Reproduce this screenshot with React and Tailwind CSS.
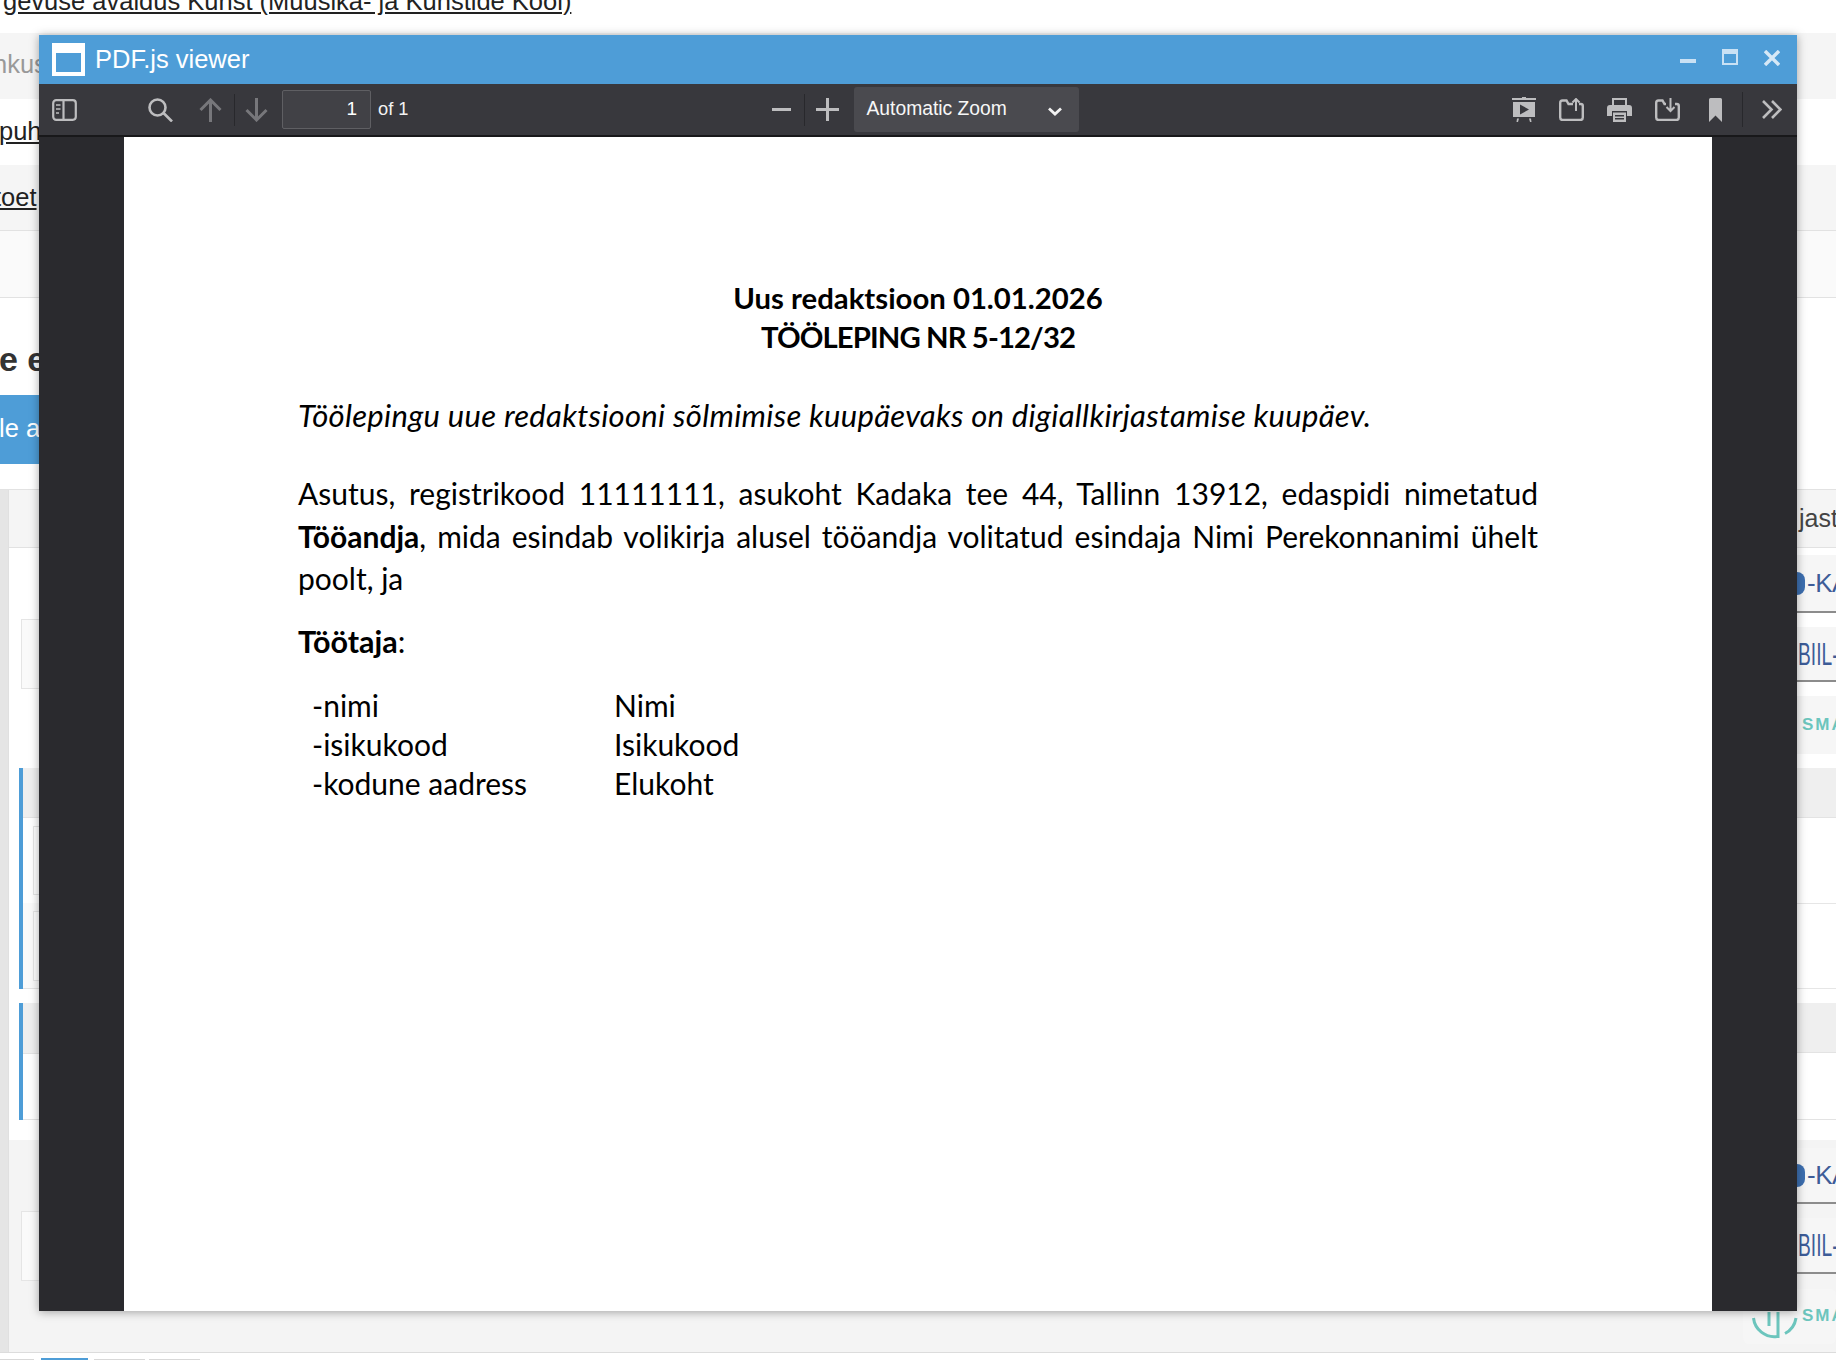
import React from 'react';

function PanelIcon() {
  return (
    <svg width="25" height="22" viewBox="0 0 25 22" fill="none" stroke="#bdbdbf" strokeWidth="2.2">
      <rect x="1.2" y="1.2" width="22.6" height="19.6" rx="3" />
      <path d="M11.5 1.2v19.6" />
      <path d="M4 6h4.500M4 10h4.500M4 14h3" strokeWidth="1.6" />
    </svg>
  );
}

function SearchIcon() {
  return (
    <svg width="25" height="24" viewBox="0 0 25 24" fill="none" stroke="#bdbdbf" strokeWidth="2.6">
      <circle cx="9.5" cy="9.5" r="8" />
      <path d="M15.5 15l8.500 8.500" />
    </svg>
  );
}

function ArrowUp() {
  return (
    <svg width="23" height="24" viewBox="0 0 23 24" fill="none" stroke="#77777b" strokeWidth="3">
      <path d="M11.5 24V2M1.500 12l10-10 10 10" />
    </svg>
  );
}

function ArrowDown() {
  return (
    <svg width="23" height="24" viewBox="0 0 23 24" fill="none" stroke="#77777b" strokeWidth="3">
      <path d="M11.5 0v22M1.500 12l10 10 10-10" />
    </svg>
  );
}

function PresentIcon() {
  return (
    <svg width="24" height="25" viewBox="0 0 24 25" fill="#bdbdbf">
      <rect x="0" y="1" width="24" height="2" />
      <rect x="10" y="0" width="4" height="2" />
      <path d="M1 5h22v15H1z" />
      <path d="M8 7.500l9 5-9 5z" fill="#38383d" />
      <path d="M5 21.500h2l-1 3.500H4.500zM17 21.500h2l.5 3.500H18z" />
    </svg>
  );
}

function FolderIcon({ down }) {
  return (
    <svg width="25" height="23" viewBox="0 0 25 23" fill="none" stroke="#bdbdbf" strokeWidth="2.4">
      <path d={down
        ? 'M11 6H9.500L7.500 2.500H3.500A2.400 2.400 0 0 0 1.200 4.900v14.700A2.400 2.400 0 0 0 3.500 22h18a2.400 2.400 0 0 0 2.300-2.400V8a2 2 0 0 0-2-2H20'
        : 'M14 6H9.500L7.500 2.500H3.500A2.400 2.400 0 0 0 1.200 4.900v14.700A2.400 2.400 0 0 0 3.500 22h18a2.400 2.400 0 0 0 2.300-2.400V8a2 2 0 0 0-2-2H20'} />
      {down ? (
        <path d="M15.500 0v12.500M11.500 9l4 4 4-4" strokeWidth="2" />
      ) : (
        <path d="M17 13V1M13.500 4.500L17 1l3.500 3.500" strokeWidth="2" />
      )}
    </svg>
  );
}

function PrintIcon() {
  return (
    <svg width="25" height="25" viewBox="0 0 25 25" fill="#bdbdbf">
      <path d="M5 8V1h15v7h-2V3H7v5z" />
      <path d="M3 8h19a3 3 0 0 1 3 3v8h-5v-5H5v5H0v-8a3 3 0 0 1 3-3z" />
      <path d="M6 15.500h13V25H6zM8 18v1.500h9V18zM8 21v1.500h9V21z" fillRule="evenodd" />
    </svg>
  );
}

function BookmarkIcon() {
  return (
    <svg width="13" height="24" viewBox="0 0 13 24" fill="#bdbdbf">
      <path d="M0 1.500A1.500 1.500 0 0 1 1.500 0h10A1.500 1.500 0 0 1 13 1.500V24l-6.500-6.500L0 24z" />
    </svg>
  );
}

function MoreIcon() {
  return (
    <svg width="20" height="19" viewBox="0 0 20 19" fill="none" stroke="#bdbdbf" strokeWidth="2.6">
      <path d="M1 1l8.500 8.500L1 18M10 1l8.500 8.500L10 18" />
    </svg>
  );
}

function PdfViewer() {
  return (
    <div className="absolute left-[39px] top-[35px] w-[1758px] h-[1276px] flex flex-col shadow-[0_1px_9px_rgba(0,0,0,0.35)]">
      {/* title bar */}
      <div className="h-[49px] bg-[#4e9dd7] flex items-center pl-[13px] shrink-0">
        <div className="w-[33px] h-[33px] bg-white pt-[10px] px-[4px] pb-[4px]">
          <div className="w-full h-full bg-[#4e9dd7]" />
        </div>
        <span className="ml-[10px] text-[25.500px] text-white">PDF.js viewer</span>
        <div className="ml-auto flex items-center pr-[17px] gap-[26px]">
          <div className="w-[16px] h-[4px] bg-[#c9e1f4] mt-[3px]" />
          <div className="w-[16px] h-[16px] -mt-[5px] border-2 border-t-[5px] border-[#c9e1f4]" />
          <svg width="16" height="16" viewBox="0 0 16 16" stroke="#d6e8f6" strokeWidth="3.400" className="-mt-[3px]">
            <path d="M1 1l14 14M15 1L1 15" />
          </svg>
        </div>
      </div>

      {/* toolbar */}
      <div className="h-[53px] bg-[#38383d] border-b-2 border-[#18181a] flex items-center shrink-0 pl-[13px] text-white">
        <PanelIcon />
        <div className="ml-[71px]"><SearchIcon /></div>
        <div className="ml-[26px]"><ArrowUp /></div>
        <div className="ml-[12px] w-px h-[32px] bg-[#28282c]" />
        <div className="ml-[10px]"><ArrowDown /></div>
        <div className="ml-[14px] w-[89px] h-[39px] bg-[#414146] border border-[#5f5f63] rounded-[2px] flex items-center justify-end pr-[13px] text-[19px]">1</div>
        <span className="ml-[7px] -mt-[2px] text-[18.300px] text-[#f2f2f2]">of 1</span>

        <div className="ml-[363px] w-[19px] h-[3px] bg-[#bdbdbf]" />
        <div className="ml-[13px] w-px h-[32px] bg-[#28282c]" />
        <div className="relative ml-[11px] w-[23px] h-[23px]">
          <div className="absolute left-0 right-0 top-[10px] h-[3px] bg-[#bdbdbf]" />
          <div className="absolute top-0 bottom-0 left-[10px] w-[3px] bg-[#bdbdbf]" />
        </div>
        <div className="ml-[15px] w-[225px] h-[45px] rounded-[3px] bg-[#4a4a4f] flex items-center pl-[13px] pr-[17px] text-[19.300px] text-[#f7f7f7]">
          <span>Automatic Zoom</span>
          <svg width="14" height="9" viewBox="0 0 14 9" fill="none" stroke="#f2f2f2" strokeWidth="2.800" className="ml-auto mt-[3px]">
            <path d="M1 1.500l6 5.500 6-5.500" />
          </svg>
        </div>

        <div className="ml-auto flex items-center pr-[15px]">
          <PresentIcon />
          <div className="ml-[23px]"><FolderIcon /></div>
          <div className="ml-[23px]"><PrintIcon /></div>
          <div className="ml-[23px]"><FolderIcon down /></div>
          <div className="ml-[29px]"><BookmarkIcon /></div>
          <div className="ml-[20px] w-px h-[35px] bg-[#28282c]" />
          <div className="ml-[19px]"><MoreIcon /></div>
        </div>
      </div>

      {/* document */}
      <div className="flex-1 bg-[#2a2a2e] px-[85px] min-h-0">
        <div className="h-full bg-white pl-[174px] pr-[174px] pt-[142px] text-black text-[30px] leading-[39px] font-['Lato','Open_Sans',sans-serif]">
          <p className="text-center font-bold text-[29.300px] leading-[38.500px]">
            Uus redaktsioon 01.01.2026
            <br />
            <span className="tracking-[-0.9px]">TÖÖLEPING NR 5-12/32</span>
          </p>
          <p className="mt-[40px] italic whitespace-nowrap text-[31px] tracking-[0.3px]">
            Töölepingu uue redaktsiooni sõlmimise kuupäevaks on digiallkirjastamise kuupäev.
          </p>
          <div className="mt-[37px] leading-[42.500px]">
            <p className="[text-align-last:justify]">Asutus, registrikood 11111111, asukoht Kadaka tee 44, Tallinn 13912, edaspidi nimetatud</p>
            <p className="[text-align-last:justify]">
              <b>Tööandja</b>, mida esindab volikirja alusel tööandja volitatud esindaja Nimi Perekonnanimi ühelt
            </p>
            <p>poolt, ja</p>
          </div>
          <p className="mt-[22px] text-[30.500px]"><b>Töötaja</b>:</p>
          <div className="mt-[25px] ml-[14px] grid grid-cols-[302px_1fr] leading-[39px]">
            <span>-nimi</span><span>Nimi</span>
            <span>-isikukood</span><span>Isikukood</span>
            <span>-kodune aadress</span><span>Elukoht</span>
          </div>
        </div>
      </div>
    </div>
  );
}

// right edge buttons, only a sliver shows beside the viewer
function KaButton({ h }) {
  return (
    <div className={`w-[39px] shrink-0 bg-[#f6f6f6] border-b-2 border-[#8c8c8c] flex items-center overflow-hidden text-[#3d5c98] text-[26px] tracking-[-0.5px] ${h}`}>
      <span className="w-[8px] h-[23px] bg-[#3d6fb0] rounded-r-full shrink-0" />
      <span className="ml-[2px] whitespace-nowrap">-KA</span>
    </div>
  );
}

function BiilButton({ h }) {
  return (
    <div className={`mt-[14px] w-[39px] shrink-0 bg-[#f6f6f6] border-b-2 border-[#8c8c8c] flex items-center overflow-hidden text-[#3d5c98] text-[32px] ${h}`}>
      <span className="ml-[1px] whitespace-nowrap origin-left scale-x-[0.6]">BIIL-</span>
    </div>
  );
}

function SmaLabel({ className = '' }) {
  return <span className={`text-[#6cc5bd] text-[17px] font-bold tracking-[2px] whitespace-nowrap ${className}`}>SMA</span>;
}

function Page() {
  return (
    <div className="flex flex-col h-full text-[#333]">
      <div className="h-[33px] overflow-hidden shrink-0">
        <a className="block pl-[3px] -mt-[12px] text-[25.500px] leading-[26px] underline text-[#222] whitespace-nowrap">
          gevuse avaldus Kunst (Muusika- ja Kunstide Kool)
        </a>
      </div>
      <div className="h-[66px] bg-[#f5f5f5] shrink-0 flex items-center overflow-hidden">
        <span className="-ml-[7px] -mt-[4px] text-[25.500px] text-[#999] whitespace-nowrap">nkus</span>
      </div>
      <div className="h-[66px] shrink-0 flex items-center overflow-hidden">
        <a className="-ml-[1px] -mt-[1px] text-[25.500px] underline text-[#222] whitespace-nowrap">puh</a>
      </div>
      <div className="h-[66px] bg-[#f5f5f5] border-b border-[#e2e2e2] shrink-0 flex items-center overflow-hidden">
        <a className="-ml-[6px] text-[25.500px] underline text-[#222] whitespace-nowrap">toet</a>
      </div>
      <div className="h-[67px] bg-[#fafafa] border-b border-[#e2e2e2] shrink-0" />
      <div className="h-[97px] shrink-0 flex items-center overflow-hidden">
        <span className="-ml-[1px] mt-[25px] text-[34px] font-bold text-[#333] whitespace-nowrap">e e</span>
      </div>
      <div className="h-[69px] w-[40px] bg-[#4e9dd7] shrink-0 flex items-center overflow-hidden">
        <span className="-ml-[1px] -mt-[2px] text-[25.500px] text-white whitespace-nowrap">le a</span>
      </div>
      <div className="h-[25px] shrink-0" />

      <div className="flex-1 border-t border-[#e2e2e2] flex min-h-0">
        <div className="w-[9px] bg-[#e5e5e5] border-r border-[#e0e0e0] shrink-0" />
        <div className="flex-1 flex flex-col min-w-0">
          <div className="h-[58px] bg-[#f5f5f5] border-b border-[#e2e2e2] flex justify-end items-center overflow-hidden shrink-0">
            <span className="text-[25px] text-[#444] whitespace-nowrap w-[37px]">jast</span>
          </div>

          {/* main rows */}
          <div className="h-[592px] shrink-0 flex justify-between">
            <div className="flex flex-col">
              <div className="mt-[71px] ml-[12px] w-[40px] h-[70px] bg-[#fafafa] border border-[#e5e5e5]" />
              <div className="mt-[79px] ml-[10px] w-[40px] border-l-4 border-[#4e9dd7]">
                <div className="h-[50px] bg-[#efefef] border-b border-[#e3e3e3]" />
                <div className="h-[85px] pt-[8px] pl-[10px]"><div className="h-[69px] bg-white border border-[#e5e5e5]" /></div>
                <div className="h-[86px] bg-[#fafafa] pt-[8px] pl-[10px] border-b border-[#e3e3e3]"><div className="h-[70px] bg-white border border-[#e5e5e5]" /></div>
              </div>
              <div className="mt-[14px] ml-[10px] w-[40px] border-l-4 border-[#4e9dd7]">
                <div className="h-[51px] bg-[#efefef] border-b border-[#e3e3e3]" />
                <div className="h-[66px] border-b border-[#e3e3e3]" />
              </div>
            </div>
            <div className="w-[39px] flex flex-col">
              <div className="h-[7px]" />
              <KaButton h="h-[58px]" />
              <BiilButton h="h-[55px]" />
              <div className="mt-[14px] h-[58px] w-[39px] bg-[#f6f6f6] flex items-center overflow-hidden">
                <SmaLabel className="ml-[5px]" />
              </div>
              <div className="mt-[14px] h-[50px] bg-[#efefef] border-b border-[#e3e3e3]" />
              <div className="h-[86px] border-b border-[#e6e6e6]" />
              <div className="h-[85px] border-b border-[#e6e6e6]" />
              <div className="mt-[14px] h-[50px] bg-[#efefef] border-b border-[#e3e3e3]" />
              <div className="h-[67px] border-b border-[#e3e3e3]" />
            </div>
          </div>

          {/* lower grey band */}
          <div className="flex-1 bg-[#f4f4f4] flex justify-between min-h-0">
            <div className="mt-[71px] ml-[12px] w-[40px] h-[70px] bg-[#fafafa] border border-[#e5e5e5]" />
            <div className="w-[93px] pt-[8px] flex flex-col items-end">
              <KaButton h="h-[56px]" />
              <BiilButton h="h-[56px]" />
              <div className="relative mt-[15px] w-[93px] h-[55px] bg-[#f6f6f6] rounded-[6px] overflow-hidden">
                <svg width="46" height="46" viewBox="0 0 46 46" fill="none" stroke="#6cc5bd" strokeWidth="3" className="ml-[9px] mt-[5px]">
                  <path d="M1.500 24A21 21 0 0 0 25 42.500M33 39.500A21 21 0 0 0 44 24" />
                  <path d="M17 18v14M26 18v26" />
                </svg>
                <SmaLabel className="absolute left-[59px] top-[14px]" />
              </div>
            </div>
          </div>
        </div>
      </div>

      {/* bottom tab strip */}
      <div className="h-[8px] bg-white border-t border-[#dcdcdc] flex items-end shrink-0">
        <div className="w-[34px] h-[1px] bg-[#d8d8d8]" />
        <div className="ml-[7px] w-[47px] h-[2px] bg-[#4e9dd7]" />
        <div className="ml-[6px] w-[51px] h-[1px] bg-[#d8d8d8]" />
        <div className="ml-[4px] w-[51px] h-[1px] bg-[#d8d8d8]" />
      </div>
    </div>
  );
}

export default function App() {
  return (
    <div className="relative w-[1836px] h-[1360px] overflow-hidden bg-white font-['Liberation_Sans',Arial,sans-serif]">
      <Page />
      <PdfViewer />
    </div>
  );
}
